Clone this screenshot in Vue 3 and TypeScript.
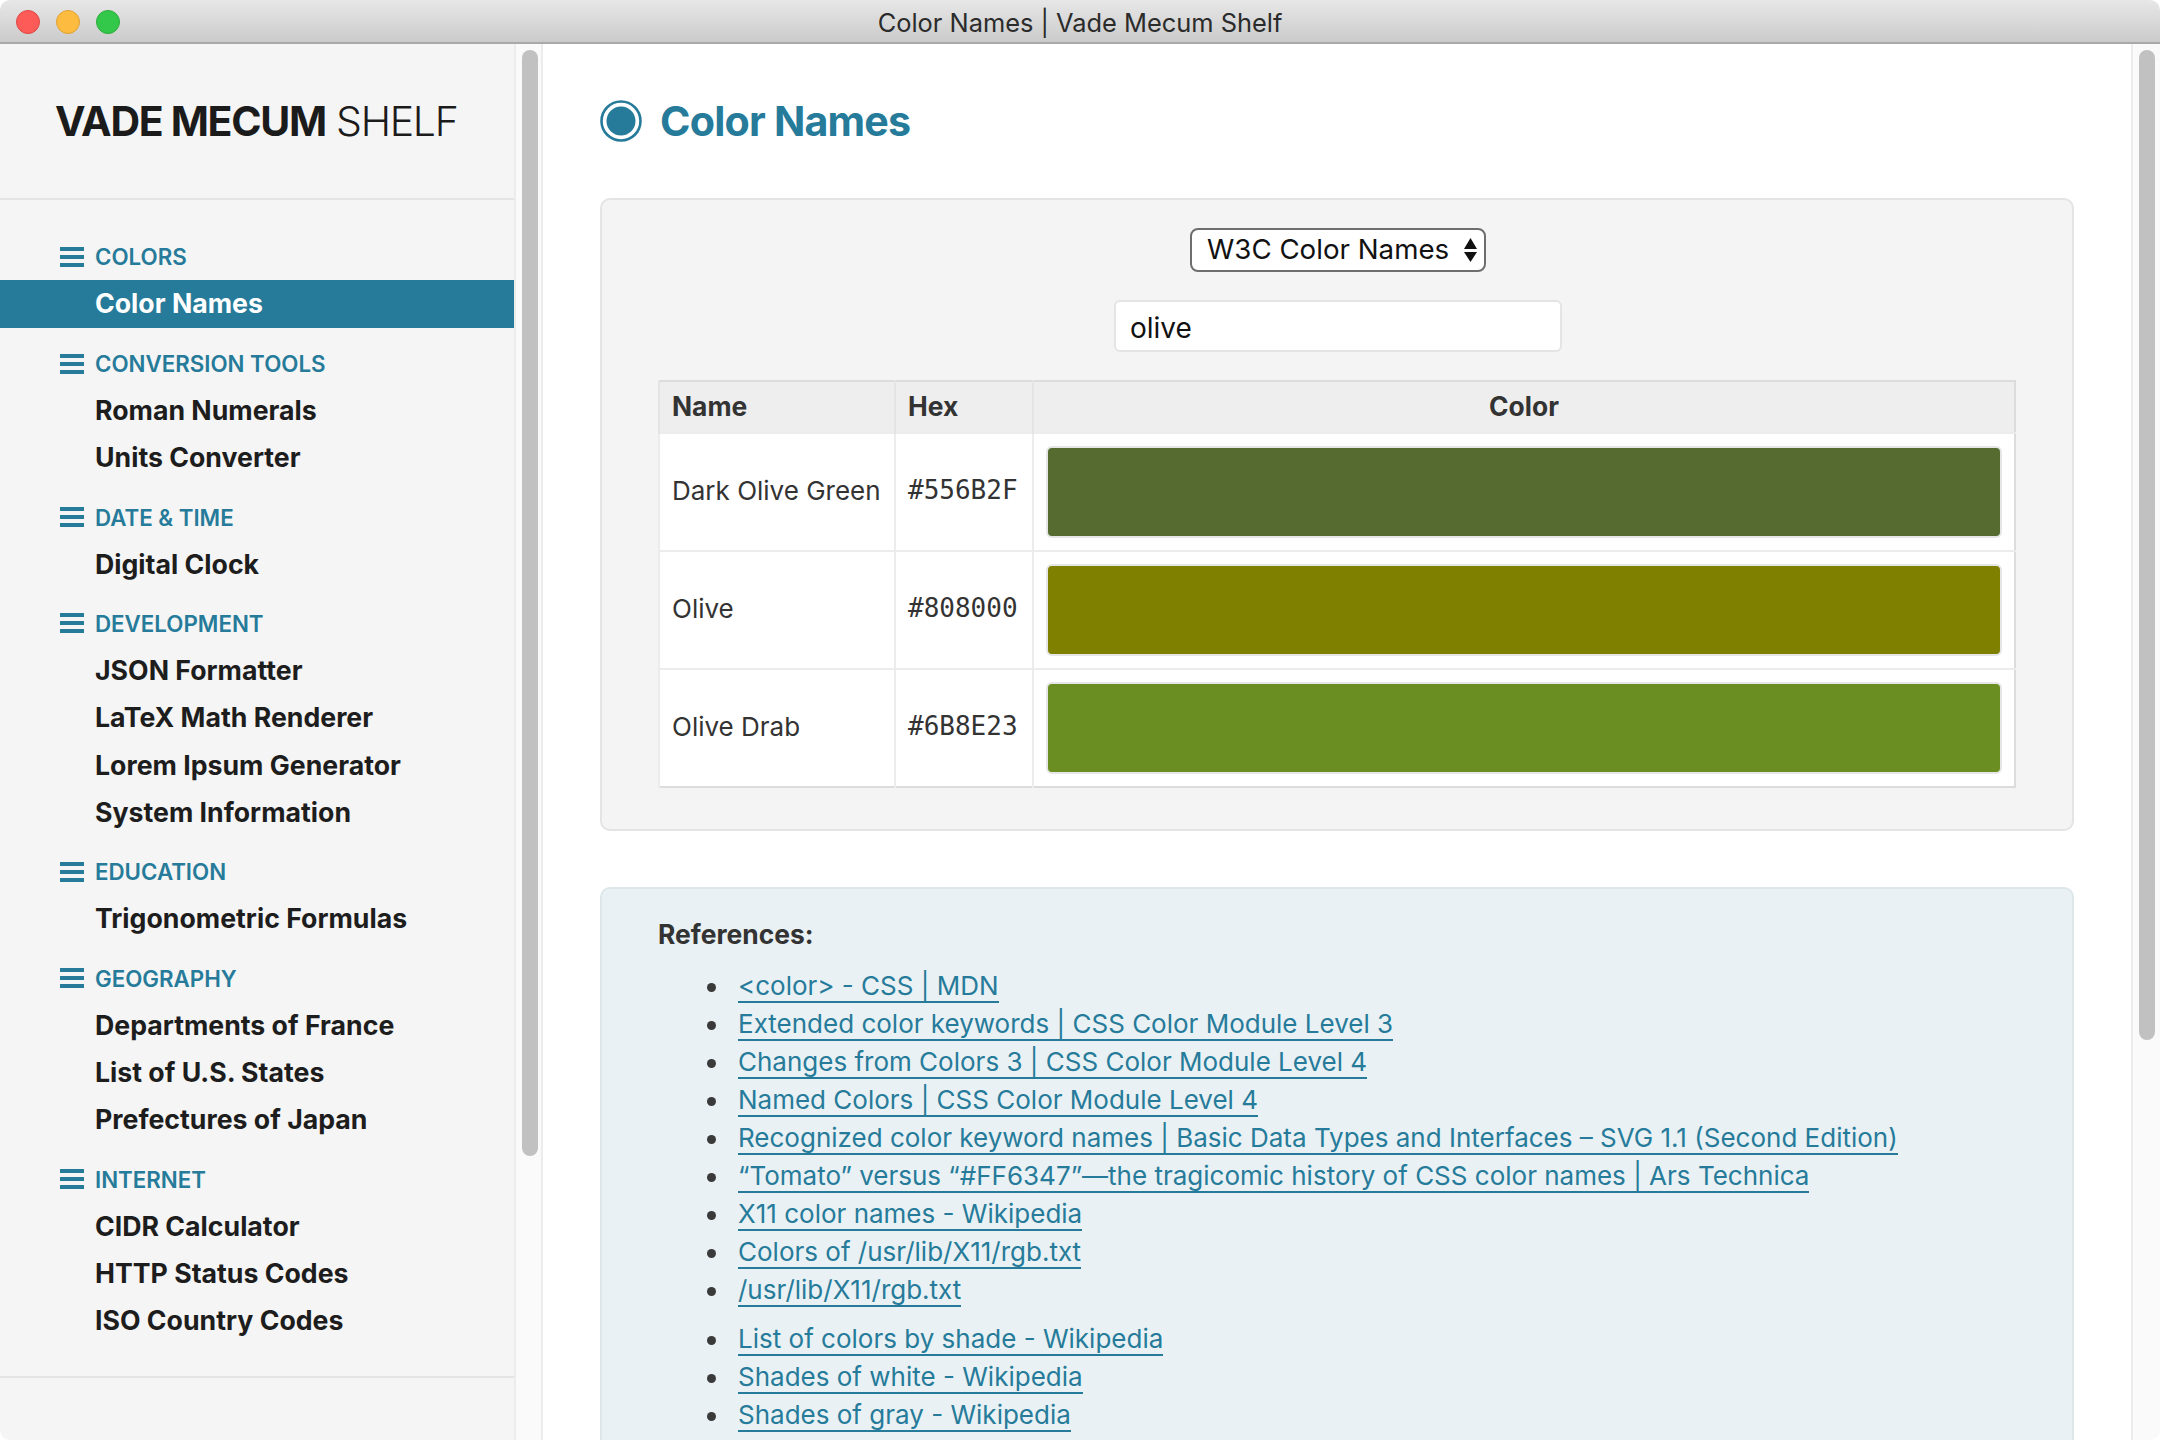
<template>
  <div class="window">
    <div class="titlebar">
      <div class="lights">
        <span class="light red"></span>
        <span class="light yellow"></span>
        <span class="light green"></span>
      </div>
      <div class="window-title">Color Names | Vade Mecum Shelf</div>
    </div>
    <div class="body">
      <aside class="sidebar">
        <div class="brand"><b>VADE MECUM</b> <span>SHELF</span></div>
        <nav class="nav">
          <section v-for="group in groups" :key="group.name" class="group">
            <h3 class="group-name">
              <svg class="menu-icon" viewBox="0 0 24 20" width="24" height="20">
                <rect y="0" width="24" height="4" />
                <rect y="8" width="24" height="4" />
                <rect y="16" width="24" height="4" />
              </svg>
              {{ group.name }}
            </h3>
            <a
              v-for="item in group.items"
              :key="item"
              class="nav-item"
              :class="{ active: item === 'Color Names' }"
            >{{ item }}</a>
          </section>
        </nav>
      </aside>
      <div class="scrolltrack side-track"><div class="thumb side-thumb"></div></div>
      <main class="main">
        <h1 class="page-title">
          <svg class="title-icon" viewBox="0 0 42 42" width="42" height="42">
            <circle cx="21" cy="21" r="19.5" fill="none" stroke="#267b9a" stroke-width="2.6" />
            <circle cx="21" cy="21" r="14.5" fill="#267b9a" />
          </svg>
          Color Names
        </h1>
        <div class="panel">
          <div class="controls">
            <div class="select">
              <span>W3C Color Names</span>
              <svg viewBox="0 0 13 24" width="13" height="24">
                <path d="M6.5 0 L13 11 H0 Z M6.5 24 L0 14 H13 Z" fill="#111" />
              </svg>
            </div>
            <input class="search" type="text" value="olive" />
          </div>
          <table class="colors">
            <thead>
              <tr>
                <th class="col-name">Name</th>
                <th class="col-hex">Hex</th>
                <th class="col-color">Color</th>
              </tr>
            </thead>
            <tbody>
              <tr v-for="row in rows" :key="row.hex">
                <td>{{ row.name }}</td>
                <td class="hex">{{ row.hex }}</td>
                <td class="swatch-cell">
                  <div class="swatch" :style="{ background: row.hex }"></div>
                </td>
              </tr>
            </tbody>
          </table>
        </div>
        <div class="panel refs">
          <p class="refs-title">References:</p>
          <ul v-for="(list, i) in links" :key="i" class="ref-list">
            <li v-for="link in list" :key="link"><a>{{ link }}</a></li>
          </ul>
        </div>
      </main>
      <div class="scrolltrack main-track"><div class="thumb main-thumb"></div></div>
    </div>
  </div>
</template>

<script setup lang="ts">
interface NavGroup {
  name: string
  items: string[]
}

const groups: NavGroup[] = [
  { name: "COLORS", items: ["Color Names"] },
  { name: "CONVERSION TOOLS", items: ["Roman Numerals", "Units Converter"] },
  { name: "DATE & TIME", items: ["Digital Clock"] },
  {
    name: "DEVELOPMENT",
    items: ["JSON Formatter", "LaTeX Math Renderer", "Lorem Ipsum Generator", "System Information"],
  },
  { name: "EDUCATION", items: ["Trigonometric Formulas"] },
  { name: "GEOGRAPHY", items: ["Departments of France", "List of U.S. States", "Prefectures of Japan"] },
  { name: "INTERNET", items: ["CIDR Calculator", "HTTP Status Codes", "ISO Country Codes"] },
]

const rows = [
  { name: "Dark Olive Green", hex: "#556B2F" },
  { name: "Olive", hex: "#808000" },
  { name: "Olive Drab", hex: "#6B8E23" },
]

const links: string[][] = [
  [
    "<color> - CSS | MDN",
    "Extended color keywords | CSS Color Module Level 3",
    "Changes from Colors 3 | CSS Color Module Level 4",
    "Named Colors | CSS Color Module Level 4",
    "Recognized color keyword names | Basic Data Types and Interfaces – SVG 1.1 (Second Edition)",
    "“Tomato” versus “#FF6347”—the tragicomic history of CSS color names | Ars Technica",
    "X11 color names - Wikipedia",
    "Colors of /usr/lib/X11/rgb.txt",
    "/usr/lib/X11/rgb.txt",
  ],
  ["List of colors by shade - Wikipedia", "Shades of white - Wikipedia", "Shades of gray - Wikipedia"],
]
</script>

<style>
html,
body {
  margin: 0;
  background: #fff;
}
</style>

<style scoped>
.window {
  width: 2160px;
  height: 1440px;
  display: flex;
  flex-direction: column;
  overflow: hidden;
  border-radius: 10px;
  background: #fff;
  font-family: Inter, "Liberation Sans", sans-serif;
  color: #333;
}

.titlebar {
  height: 42px;
  flex: none;
  position: relative;
  display: flex;
  align-items: center;
  justify-content: center;
  background: linear-gradient(#e7e7e7, #cbcbcb);
  border-bottom: 2px solid #a9a9a9;
}
.lights {
  position: absolute;
  left: 16px;
  top: 10px;
  display: flex;
  gap: 16px;
}
.light {
  width: 24px;
  height: 24px;
  box-sizing: border-box;
  border-radius: 50%;
  border: 1px solid;
}
.red {
  background: #fc5b57;
  border-color: #df4744;
}
.yellow {
  background: #fdbc40;
  border-color: #dea033;
}
.green {
  background: #34c84a;
  border-color: #2aac3b;
}
.window-title {
  padding-top: 2px;
  font-size: 25.4px;
  color: #2b2b2b;
}

.body {
  flex: 1;
  min-height: 0;
  display: flex;
}

.sidebar {
  width: 514px;
  flex: none;
  background: #f5f5f5;
}
.brand {
  height: 156px;
  box-sizing: border-box;
  padding: 52px 0 0 55px;
  border-bottom: 2px solid #e4e4e4;
  font-size: 41px;
  line-height: 50px;
  letter-spacing: -1.3px;
  color: #1b1b1b;
}
.brand b {
  font-weight: 700;
}
.brand span {
  font-weight: 300;
}
.nav {
  padding: 33px 0 31px;
  border-bottom: 2px solid #e4e4e4;
}
.group + .group {
  margin-top: 12px;
}
.group-name {
  height: 47px;
  margin: 0;
  padding-left: 60px;
  display: flex;
  align-items: center;
  gap: 11px;
  font-size: 22.3px;
  font-weight: 600;
  color: #267b9a;
}
.menu-icon {
  fill: #267b9a;
  flex: none;
}
.nav-item {
  display: block;
  height: 47.33px;
  padding-left: 95px;
  font-size: 26.7px;
  font-weight: 700;
  line-height: 47px;
  color: #1d1d1d;
}
.nav-item.active {
  height: 48px;
  background: #267b9a;
  color: #fff;
}

.scrolltrack {
  flex: none;
  box-sizing: border-box;
  background: #fafafa;
  border-left: 2px solid #ececec;
  border-right: 2px solid #ececec;
}
.side-track {
  width: 29px;
  padding: 6px 0 0 6px;
}
.main-track {
  width: 29px;
  padding: 6px 0 0 6px;
  border-right: 0;
}
.thumb {
  width: 16px;
  border-radius: 8px;
  background: #c1c1c1;
}
.side-thumb {
  height: 1106px;
}
.main-thumb {
  height: 990px;
}

.main {
  flex: 1;
  min-width: 0;
  padding: 0 57px;
  overflow: hidden;
}
.page-title {
  height: 154px;
  margin: 0;
  display: flex;
  align-items: center;
  gap: 18px;
  font-size: 41.2px;
  font-weight: 700;
  letter-spacing: -0.8px;
  color: #267b9a;
}
.title-icon {
  flex: none;
}

.panel {
  box-sizing: border-box;
  padding: 28px 56px 41px;
  background: #f4f4f4;
  border: 2px solid #e4e4e4;
  border-radius: 10px;
}
.controls {
  padding-left: 2px;
  display: flex;
  flex-direction: column;
  align-items: center;
  gap: 28px;
}
.select {
  width: 296px;
  height: 44px;
  box-sizing: border-box;
  padding: 0 7px 2px 15px;
  display: flex;
  align-items: center;
  justify-content: space-between;
  background: #fff;
  border: 2px solid #6e6e6e;
  border-radius: 8px;
  font-size: 27.7px;
  color: #111;
}
.select svg {
  flex: none;
  margin-top: 2px;
}
.search {
  width: 448px;
  height: 52px;
  box-sizing: border-box;
  padding: 4px 14px 0;
  background: #fff;
  border: 2px solid #e4e4e4;
  border-radius: 6px;
  font-family: inherit;
  font-size: 28px;
  color: #111;
  outline: none;
}

.colors {
  width: 100%;
  margin-top: 28px;
  border-collapse: collapse;
  table-layout: fixed;
  background: #fff;
  border: 2px solid #dcdcdc;
  font-size: 26px;
}
.colors th {
  height: 52px;
  padding: 0 12px 2px;
  box-sizing: border-box;
  background: #eee;
  border-left: 2px solid #e4e4e4;
  font-size: 26.4px;
  font-weight: 700;
  text-align: left;
  color: #333;
}
.colors th.col-color {
  text-align: center;
}
.col-name {
  width: 236px;
}
.col-hex {
  width: 138px;
}
.colors td {
  height: 118px;
  padding: 0 12px 4px;
  box-sizing: border-box;
  border-left: 2px solid #ececec;
  border-top: 2px solid #ececec;
  color: #333;
}
.colors .hex {
  font-family: "DejaVu Sans Mono", monospace;
  font-size: 26px;
}
.colors .swatch-cell {
  padding: 0 12px;
}
.swatch {
  height: 92px;
  box-sizing: border-box;
  border: 2px solid #e6e6e6;
  border-radius: 6px;
  background-clip: padding-box;
}

.refs {
  margin-top: 56px;
  padding-top: 27px;
  background: #e9f1f4;
  border-color: #dde7ea;
}
.refs-title {
  margin: 0 0 15px;
  font-size: 26.4px;
  font-weight: 700;
  line-height: 36px;
}
.ref-list {
  margin: 0 0 11px;
  padding-left: 80px;
  list-style: none;
  font-size: 26px;
  line-height: 38px;
}
.ref-list li {
  position: relative;
}
.ref-list li::before {
  content: "";
  position: absolute;
  left: -31px;
  top: 16px;
  width: 9px;
  height: 9px;
  border-radius: 50%;
  background: #3a3a3a;
}
.ref-list a {
  color: #267b9a;
  border-bottom: 2px solid #267b9a;
}
</style>
